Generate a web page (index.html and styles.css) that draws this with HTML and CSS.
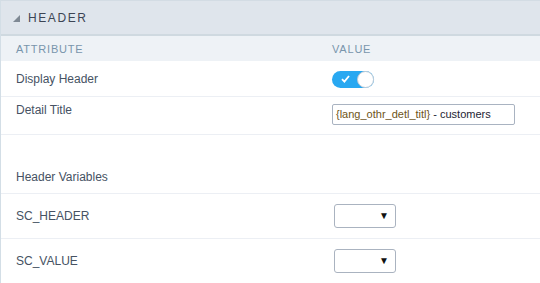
FILE: index.html
```html
<!DOCTYPE html>
<html lang="en">
<head>
    <meta charset="UTF-8">
    <title>Header</title>
    <link rel="stylesheet" href="styles.css">
</head>
<body>
    <div class="panel">
        <div class="panel-title">
            <svg class="caret" width="7" height="7" viewBox="0 0 7 7"><polygon points="7,0 7,7 0,7" fill="#7f8994"/></svg>
            <span>HEADER</span>
        </div>
        <div class="row col-head">
            <div>Attribute</div>
            <div>Value</div>
        </div>
        <div class="row row-center row-toggle">
            <div class="label">Display Header</div>
            <div>
                <span class="toggle">
                    <svg class="check" width="9" height="8" viewBox="0 0 9 8"><path d="M1 4.2 L3.4 6.6 L8 1" fill="none" stroke="#fff" stroke-width="1.8"/></svg>
                    <span class="knob"></span>
                </span>
            </div>
        </div>
        <div class="row row-title">
            <div class="label">Detail Title</div>
            <div class="text-input"><span class="var">{lang_othr_detl_titl}</span> - customers</div>
        </div>
        <div class="row row-section">
            <div class="label">Header Variables</div>
            <div></div>
        </div>
        <div class="row row-center row-var">
            <div class="label">SC_HEADER</div>
            <div><span class="select">&#9660;</span></div>
        </div>
        <div class="row row-center row-var last">
            <div class="label">SC_VALUE</div>
            <div><span class="select">&#9660;</span></div>
        </div>
    </div>
</body>
</html>
```

FILE: styles.css
```css
body {
    margin: 0;
    font-family: "Liberation Sans", Arial, sans-serif;
    font-size: 12px;
    color: #465263;
    background: #fff;
}
.panel {
    border-left: 1px solid #d3dee6;
    border-top: 1px solid #d3dce4;
    height: 282px;
    overflow: hidden;
}
.panel-title {
    height: 33px;
    background: #dfe5ec;
    border-bottom: 2px solid #cfd9e0;
    display: flex;
    align-items: center;
    padding-left: 12px;
    font-size: 12px;
    letter-spacing: 1.6px;
    color: #3c4554;
}
.caret {
    margin-right: 8px;
    margin-top: 1px;
}
.row {
    display: grid;
    grid-template-columns: 316px 1fr;
    padding-left: 15px;
    border-bottom: 1px solid #eceff4;
}
.col-head {
    height: 25px;
    align-items: center;
    background: #eef2f6;
    border-bottom: none;
    text-transform: uppercase;
    font-size: 11px;
    letter-spacing: 0.8px;
    color: #7995ac;
}
.label {
    line-height: 14px;
}
.row-center {
    align-items: center;
}
.row-toggle {
    height: 35px;
}
.row-title {
    height: 37px;
    align-items: start;
}
.row-title .label {
    margin-top: 6px;
}
.row-section {
    height: 58px;
}
.row-section .label {
    margin-top: 35px;
}
.row-var {
    height: 44px;
}
.last {
    border-bottom: none;
}
.toggle {
    position: relative;
    display: inline-block;
    width: 42px;
    height: 17px;
    margin-top: 2px;
    border-radius: 9px;
    background: #29a8f1;
    vertical-align: middle;
}
.check {
    position: absolute;
    left: 9px;
    top: 4px;
}
.knob {
    position: absolute;
    right: 0;
    top: 0;
    width: 15px;
    height: 15px;
    border-radius: 50%;
    background: #fff;
    border: 1px solid #c3ccd6;
}
.text-input {
    margin-top: 7px;
    width: 178px;
    height: 19px;
    line-height: 19px;
    border: 1px solid #a9b3c1;
    border-radius: 2px;
    padding-left: 3px;
    font-size: 11px;
    color: #1d2433;
    white-space: nowrap;
    overflow: hidden;
}
.var {
    color: #6e5418;
}
.select {
    display: block;
    margin-left: 2px;
    width: 54px;
    height: 22px;
    padding-right: 6px;
    border: 1px solid #aab3c0;
    border-radius: 3px;
    font-size: 10px;
    line-height: 22px;
    text-align: right;
    color: #111;
}
```
